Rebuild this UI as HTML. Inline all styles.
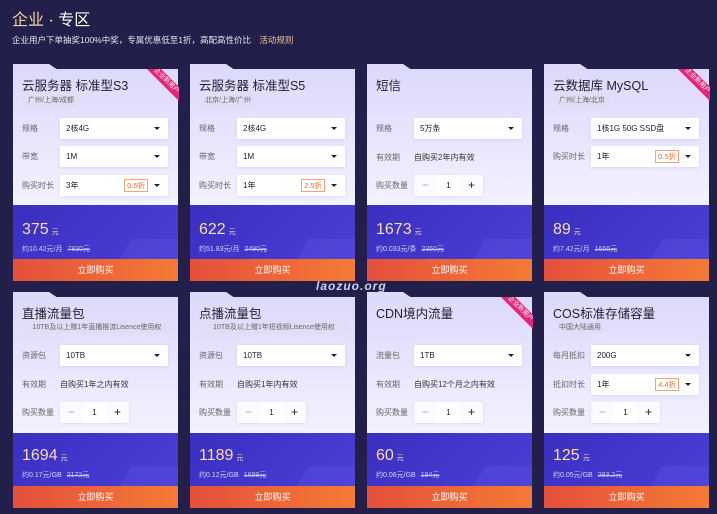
<!DOCTYPE html>
<html><head><meta charset="utf-8"><style>
*{margin:0;padding:0;box-sizing:border-box}
body{width:717px;height:514px;background:#221f4b;font-family:"Liberation Sans","Noto Sans CJK SC",sans-serif;position:relative;overflow:hidden;color:#222}
.h1{position:absolute;left:12px;top:6px;font-size:16px;color:#fff;}
.h1 b{color:#f6d2a4;font-weight:normal}
.sub{position:absolute;left:12px;top:34px;font-size:8.5px;color:#e6e4f2}
.sub span{color:#f2c58f;margin-left:6px}
.card{position:absolute;width:165px;}
.tab{position:absolute;left:0;top:0;width:45px;height:6px;background:#dcdaf8;clip-path:polygon(0 0,80% 0,100% 100%,0 100%)}
.light{position:absolute;left:0;top:5px;width:165px;background:linear-gradient(180deg,#dcd9fb,#f3f2fe)}
.purple{position:absolute;left:0;width:165px;background:linear-gradient(135deg,#3a2fc0,#4a3fd6);overflow:hidden}
.purple .deco{position:absolute;right:-6px;bottom:-6px;width:60px;height:26px;background:#5449d8;transform:skewX(-30deg);opacity:.6}
.btn{position:absolute;left:0;width:165px;height:22px;background:linear-gradient(90deg,#e4503c,#f47a35);color:#fff;font-size:9px;text-align:center;line-height:22px}
.title{position:absolute;left:9px;font-size:12.5px;color:#1f1f2e}
.tag{position:absolute;left:9px;height:13px;line-height:13px;padding:0 6px;font-size:7px;color:#666;background:#e0ddf6;border-radius:7px}
.lab{position:absolute;left:9px;font-size:8px;color:#666}
.sel{position:absolute;left:47px;width:108px;height:21px;background:#fff;font-size:8px;line-height:21px;padding-left:6px;box-shadow:0 1px 3px rgba(80,70,180,.12)}
.sel:after{content:"";position:absolute;right:8px;top:9px;border:3px solid transparent;border-top-color:#222}
.disc{position:absolute;right:20px;top:4px;height:13px;line-height:12px;font-size:7.5px;color:#f36b2b;border:1px solid #f5a27c;padding:0 2px}
.txt{position:absolute;left:47px;font-size:8px;color:#333}
.qty{position:absolute;left:47px;width:69px;height:21px;display:flex;box-shadow:0 1px 3px rgba(80,70,180,.12)}
.qty div{width:23px;height:21px;background:#fafaff;text-align:center;line-height:21px;font-size:12px;color:#aaa}
.qty div:nth-child(2){background:#fff;font-size:8px;color:#222}
.qty div:nth-child(3){color:#222}
.price{position:absolute;left:9px;font-size:16px;color:#fbdcae}
.price small{font-size:7px;margin-left:3px}
.per{position:absolute;left:9px;font-size:7px;color:#d8d6f6}
.per s{margin-left:5px;color:#c8c4ef}
.rib{position:absolute;right:-1px;top:5px;width:36px;height:36px;overflow:hidden}
.rib div{position:absolute;right:-15px;top:7px;width:56px;height:10px;background:#e4257a;color:#fff;font-size:6.5px;line-height:10px;text-align:center;transform:rotate(45deg)}
.wm{position:absolute;left:316px;top:279px;font-size:12px;font-style:italic;font-weight:bold;color:#cfd0e8;letter-spacing:1px}
</style></head><body>
<div class="h1"><b>企业</b> · 专区</div>
<div class="sub">企业用户下单抽奖100%中奖，专属优惠低至1折，高配高性价比 <span>活动规则</span></div>

<!-- row 1 -->
<div class="card" style="left:13px;top:64px">
<div class="tab"></div><div class="light" style="height:136px"></div>
<div class="rib"><div>企业新用户</div></div>
<div class="title" style="top:11px">云服务器 标准型S3</div>
<div class="tag" style="top:30px">广州/上海/成都</div>
<div class="lab" style="top:59px">规格</div><div class="sel" style="top:54px">2核4G</div>
<div class="lab" style="top:87px">带宽</div><div class="sel" style="top:82px">1M</div>
<div class="lab" style="top:116px">购买时长</div><div class="sel" style="top:111px">3年<span class="disc">0.5折</span></div>
<div class="purple" style="top:141px;height:54px"><div class="deco"></div></div>
<div class="price" style="top:157px">375<small>元</small></div>
<div class="per" style="top:180px">约10.42元/月<s>7830元</s></div>
<div class="btn" style="top:195px">立即购买</div>
</div>

<div class="card" style="left:190px;top:64px">
<div class="tab"></div><div class="light" style="height:136px"></div>
<div class="title" style="top:11px">云服务器 标准型S5</div>
<div class="tag" style="top:30px">北京/上海/广州</div>
<div class="lab" style="top:59px">规格</div><div class="sel" style="top:54px">2核4G</div>
<div class="lab" style="top:87px">带宽</div><div class="sel" style="top:82px">1M</div>
<div class="lab" style="top:116px">购买时长</div><div class="sel" style="top:111px">1年<span class="disc">2.5折</span></div>
<div class="purple" style="top:141px;height:54px"><div class="deco"></div></div>
<div class="price" style="top:157px">622<small>元</small></div>
<div class="per" style="top:180px">约51.83元/月<s>2490元</s></div>
<div class="btn" style="top:195px">立即购买</div>
</div>

<div class="card" style="left:367px;top:64px">
<div class="tab"></div><div class="light" style="height:136px"></div>
<div class="title" style="top:11px">短信</div>
<div class="lab" style="top:59px">规格</div><div class="sel" style="top:54px">5万条</div>
<div class="lab" style="top:88px">有效期</div><div class="txt" style="top:88px">自购买2年内有效</div>
<div class="lab" style="top:116px">购买数量</div><div class="qty" style="top:111px"><div>−</div><div>1</div><div>+</div></div>
<div class="purple" style="top:141px;height:54px"><div class="deco"></div></div>
<div class="price" style="top:157px">1673<small>元</small></div>
<div class="per" style="top:180px">约0.033元/条<s>2350元</s></div>
<div class="btn" style="top:195px">立即购买</div>
</div>

<div class="card" style="left:544px;top:64px">
<div class="tab"></div><div class="light" style="height:136px"></div>
<div class="rib"><div>企业新用户</div></div>
<div class="title" style="top:11px">云数据库 MySQL</div>
<div class="tag" style="top:30px">广州/上海/北京</div>
<div class="lab" style="top:59px">规格</div><div class="sel" style="top:54px">1核1G 50G SSD盘</div>
<div class="lab" style="top:87px">购买时长</div><div class="sel" style="top:82px">1年<span class="disc">0.5折</span></div>
<div class="purple" style="top:141px;height:54px"><div class="deco"></div></div>
<div class="price" style="top:157px">89<small>元</small></div>
<div class="per" style="top:180px">约7.42元/月<s>1656元</s></div>
<div class="btn" style="top:195px">立即购买</div>
</div>

<!-- row 2 -->
<div class="card" style="left:13px;top:292px">
<div class="tab"></div><div class="light" style="height:136px"></div>
<div class="title" style="top:11px">直播流量包</div>
<div class="tag" style="top:29px;left:9px;width:150px;text-align:center">10TB及以上赠1年直播推流Lisence使用权</div>
<div class="lab" style="top:58px">资源包</div><div class="sel" style="top:53px">10TB</div>
<div class="lab" style="top:87px">有效期</div><div class="txt" style="top:87px">自购买1年之内有效</div>
<div class="lab" style="top:115px">购买数量</div><div class="qty" style="top:110px"><div>−</div><div>1</div><div>+</div></div>
<div class="purple" style="top:141px;height:53px"><div class="deco"></div></div>
<div class="price" style="top:155px">1694<small>元</small></div>
<div class="per" style="top:178px">约0.17元/GB<s>2172元</s></div>
<div class="btn" style="top:194px">立即购买</div>
</div>

<div class="card" style="left:190px;top:292px">
<div class="tab"></div><div class="light" style="height:136px"></div>
<div class="title" style="top:11px">点播流量包</div>
<div class="tag" style="top:29px;left:9px;width:150px;text-align:center">10TB及以上赠1年短视频Lisence使用权</div>
<div class="lab" style="top:58px">资源包</div><div class="sel" style="top:53px">10TB</div>
<div class="lab" style="top:87px">有效期</div><div class="txt" style="top:87px">自购买1年内有效</div>
<div class="lab" style="top:115px">购买数量</div><div class="qty" style="top:110px"><div>−</div><div>1</div><div>+</div></div>
<div class="purple" style="top:141px;height:53px"><div class="deco"></div></div>
<div class="price" style="top:155px">1189<small>元</small></div>
<div class="per" style="top:178px">约0.12元/GB<s>1699元</s></div>
<div class="btn" style="top:194px">立即购买</div>
</div>

<div class="card" style="left:367px;top:292px">
<div class="tab"></div><div class="light" style="height:136px"></div>
<div class="rib"><div>企业新用户</div></div>
<div class="title" style="top:11px">CDN境内流量</div>
<div class="lab" style="top:58px">流量包</div><div class="sel" style="top:53px">1TB</div>
<div class="lab" style="top:87px">有效期</div><div class="txt" style="top:87px">自购买12个月之内有效</div>
<div class="lab" style="top:115px">购买数量</div><div class="qty" style="top:110px"><div>−</div><div>1</div><div>+</div></div>
<div class="purple" style="top:141px;height:53px"><div class="deco"></div></div>
<div class="price" style="top:155px">60<small>元</small></div>
<div class="per" style="top:178px">约0.06元/GB<s>194元</s></div>
<div class="btn" style="top:194px">立即购买</div>
</div>

<div class="card" style="left:544px;top:292px">
<div class="tab"></div><div class="light" style="height:136px"></div>
<div class="title" style="top:11px">COS标准存储容量</div>
<div class="tag" style="top:29px">中国大陆通用</div>
<div class="lab" style="top:58px">每月抵扣</div><div class="sel" style="top:53px">200G</div>
<div class="lab" style="top:87px">抵扣时长</div><div class="sel" style="top:82px">1年<span class="disc">4.4折</span></div>
<div class="lab" style="top:115px">购买数量</div><div class="qty" style="top:110px"><div>−</div><div>1</div><div>+</div></div>
<div class="purple" style="top:141px;height:53px"><div class="deco"></div></div>
<div class="price" style="top:155px">125<small>元</small></div>
<div class="per" style="top:178px">约0.05元/GB<s>283.2元</s></div>
<div class="btn" style="top:194px">立即购买</div>
</div>

<div class="wm">laozuo.org</div>
</body></html>
